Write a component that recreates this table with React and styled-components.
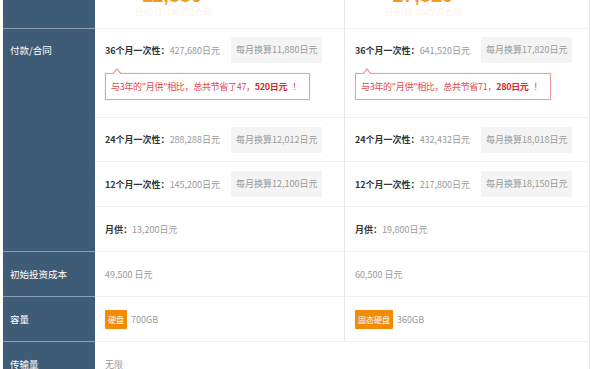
import React from "react";
import styled, { createGlobalStyle } from "styled-components";

const GlobalStyle = createGlobalStyle`
  html, body {
    margin: 0;
    padding: 0;
    background: #fff;
    overflow: hidden;
  }
  body {
    font-family: "Noto Sans CJK SC", "Noto Sans", sans-serif;
  }
`;

const Table = styled.div`
  display: grid;
  grid-template-columns: 92px 249px 245px;
  width: fit-content;
  margin-left: 3px;
  border-right: 1px solid #e4e9ef;
`;

const Label = styled.div`
  background: #3f5c77;
  color: #fff;
  font-size: 9.5px;
  line-height: 14px;
  padding: ${(p) => (p.$top ? "14px" : "15px")} 0 0 7px;
  border-bottom: 1px solid #8da1b3;
  height: ${(p) => p.$h}px;
  box-sizing: border-box;
`;

const Cell = styled.div`
  border-bottom: 1px solid #eceff3;
  border-left: ${(p) => (p.$second ? "1px solid #e4e9ef" : "none")};
  height: ${(p) => p.$h}px;
  box-sizing: border-box;
  padding: 0 0 0 10px;
  display: flex;
  align-items: center;
  font-size: 9px;
  color: #999;
  overflow: hidden;
`;

const StackCell = styled(Cell)`
  flex-direction: column;
  align-items: stretch;
  padding: 0;
`;

const PriceCell = styled.div`
  border-bottom: 1px solid #eceff3;
  border-left: ${(p) => (p.$second ? "1px solid #e4e9ef" : "none")};
  height: 29px;
  box-sizing: border-box;
  padding-left: 40px;
  overflow: hidden;
`;

const Price = styled.div`
  font-family: "Liberation Sans", Arial, sans-serif;
  font-weight: bold;
  font-size: 20px;
  line-height: 20px;
  color: #f39a1e;
  margin-top: -15px;
  padding-left: 7px;
`;

const PriceNote = styled.div`
  font-size: 8px;
  line-height: 10px;
  color: #fdf0e0;
  margin-top: 2px;
`;

const SubRow = styled.div`
  height: ${(p) => p.$h}px;
  box-sizing: border-box;
  border-bottom: ${(p) => (p.$last ? "none" : "1px solid #eceff3")};
  padding: ${(p) => (p.$top ? "8px 0 0 10px" : "0 0 0 10px")};
  display: flex;
  flex-direction: column;
  justify-content: ${(p) => (p.$top ? "flex-start" : "center")};
  align-items: flex-start;
`;

const Line = styled.div`
  display: flex;
  align-items: center;
  height: 26px;
`;

const Plan = styled.div`
  width: 126px;
  font-size: 9px;
  color: #999;
  white-space: nowrap;
`;

const Strong = styled.b`
  color: #333;
  font-weight: bold;
`;

const Monthly = styled.div`
  background: #f4f4f4;
  color: #999;
  font-size: 9px;
  height: 26px;
  line-height: 26px;
  padding: 0 5px;
  white-space: nowrap;
`;

const Tip = styled.div`
  position: relative;
  margin-top: 10px;
  height: 27px;
  box-sizing: border-box;
  line-height: 25px;
  border: 1px solid #ee9c9c;
  box-shadow: 0 0 2px rgba(230, 120, 120, 0.25);
  padding: 0 8px 0 5px;
  color: #e5484d;
  font-size: 9px;
  letter-spacing: -0.3px;
  white-space: nowrap;
  background: #fff;

  &::before,
  &::after {
    content: "";
    position: absolute;
    left: 6px;
    border-style: solid;
    border-color: transparent;
  }
  &::before {
    top: -6px;
    border-width: 0 5px 6px 5px;
    border-bottom-color: #ee9c9c;
  }
  &::after {
    top: -4px;
    left: 7px;
    border-width: 0 4px 5px 4px;
    border-bottom-color: #fff;
  }
`;

const TipStrong = styled.b`
  color: #d8262c;
  font-weight: bold;
  margin-right: 5px;
`;

const Badge = styled.span`
  display: inline-block;
  background: #f28b06;
  color: #fff;
  font-size: 8px;
  height: 19px;
  line-height: 19px;
  padding: 0 3px;
  margin-right: 4px;
  border-radius: 1px;
`;

const plans = [
  {
    price: "11,880",
    rows: [
      ["36个月一次性：", "427,680日元", "每月换算11,880日元"],
      ["24个月一次性：", "288,288日元", "每月换算12,012日元"],
      ["12个月一次性：", "145,200日元", "每月换算12,100日元"],
    ],
    tip: ['与3年的"月供"相比，总共节省了47，', "520日元"],
    monthly: "13,200日元",
    initial: "49,500 日元",
    badge: "硬盘",
    size: "700GB",
    transfer: "无限",
  },
  {
    price: "17,820",
    rows: [
      ["36个月一次性：", "641,520日元", "每月换算17,820日元"],
      ["24个月一次性：", "432,432日元", "每月换算18,018日元"],
      ["12个月一次性：", "217,800日元", "每月换算18,150日元"],
    ],
    tip: ['与3年的"月供"相比，总共节省71，', "280日元"],
    monthly: "19,800日元",
    initial: "60,500 日元",
    badge: "固态硬盘",
    size: "360GB",
    transfer: "",
  },
];

const heights = [89, 44, 45];

const App = () => {
  return (
    <>
      <GlobalStyle />
      <Table>
        <Label $h={29} />
        {plans.map((p, i) => (
          <PriceCell key={i} $second={i === 1}>
            <Price>{p.price}</Price>
            <PriceNote>日元/月（36个月合同）</PriceNote>
          </PriceCell>
        ))}

        <Label $h={223} $top>
          付款/合同
        </Label>
        {plans.map((p, i) => (
          <StackCell key={i} $h={223} $second={i === 1}>
            {p.rows.map((r, j) => (
              <SubRow key={j} $h={heights[j]} $top={j === 0}>
                <Line>
                  <Plan>
                    <Strong>{r[0]}</Strong>
                    {r[1]}
                  </Plan>
                  <Monthly>{r[2]}</Monthly>
                </Line>
                {j === 0 && (
                  <Tip>
                    {p.tip[0]}
                    <TipStrong>{p.tip[1]}</TipStrong>！
                  </Tip>
                )}
              </SubRow>
            ))}
            <SubRow $h={44} $last>
              <Plan>
                <Strong>月供：</Strong>
                {p.monthly}
              </Plan>
            </SubRow>
          </StackCell>
        ))}

        <Label $h={45}>初始投资成本</Label>
        {plans.map((p, i) => (
          <Cell key={i} $h={45} $second={i === 1}>
            {p.initial}
          </Cell>
        ))}

        <Label $h={45}>容量</Label>
        {plans.map((p, i) => (
          <Cell key={i} $h={45} $second={i === 1}>
            <Badge>{p.badge}</Badge>
            {p.size}
          </Cell>
        ))}

        <Label $h={45}>传输量</Label>
        {plans.map((p, i) => (
          <Cell key={i} $h={45} $second={false}>
            {p.transfer}
          </Cell>
        ))}
      </Table>
    </>
  );
};

export default App;
